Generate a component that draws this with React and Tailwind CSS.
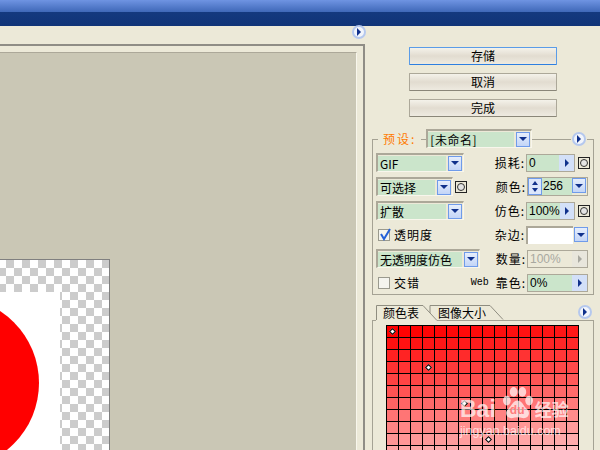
import { Fragment } from 'react'

const font = 'font-["Liberation_Sans","Noto_Sans_CJK_SC",sans-serif]'
const cjk = 'font-["Noto_Sans_CJK_SC",sans-serif]'

function Arrow({ dir = 'right', disabled }) {
  const fill = disabled ? '#a8a8a0' : '#10318c'
  return (
    <svg width="8" height="8" viewBox="0 0 8 8">
      {dir === 'right' && <path d="M2 0 L6 4 L2 8 Z" fill={fill} />}
      {dir === 'down' && <path d="M0 2 H8 L4 6 Z" fill={fill} />}
    </svg>
  )
}

function MenuCircle() {
  return (
    <div className="w-[14px] h-[14px] rounded-full border-2 border-[#b5c8ee] bg-[#f2f5fb] flex items-center justify-center">
      <svg width="6" height="8" viewBox="0 0 6 8">
        <path d="M1 0 L5 4 L1 8 Z" fill="#10318c" />
      </svg>
    </div>
  )
}

function DownButton() {
  return (
    <div className="w-[14px] h-[15px] shrink-0 border border-[#6f9bea] bg-gradient-to-b from-[#e6eefc] to-[#c3d5f7] flex items-center justify-center">
      <Arrow dir="down" />
    </div>
  )
}

function RoundToggle() {
  return (
    <div className="w-[12px] h-[12px] border border-[#222] bg-[#ece9d8] flex items-center justify-center shrink-0">
      <div className="w-[8px] h-[8px] rounded-full border border-[#333] bg-[#e4e4e4]" />
    </div>
  )
}

function Select({ label, width, spaced }) {
  return (
    <div
      className="h-[19px] flex items-center border-t-2 border-l-2 border-[#aca899] border-r border-r-[#f8f6ec] border-b border-b-[#f8f6ec] pr-[1px]"
      style={{ width }}
    >
      <div className={`flex-1 h-[15px] bg-[#cbe5cb] text-[12px] leading-[15px] pl-[2px] whitespace-nowrap ${spaced ? 'tracking-[0.5px]' : ''} ${cjk}`}>{label}</div>
      <div className="ml-[2px]">
        <DownButton />
      </div>
    </div>
  )
}

function ArrowField({ value }) {
  return (
    <div className="w-[49px] h-[18px] flex border border-[#aca899] shrink-0 mr-[2px]">
      <div className={`flex-1 text-[12px] leading-[16px] pl-[2px] bg-[#cbe5cb] text-black ${font}`}>{value}</div>
      <div className="w-[15px] flex items-center justify-center bg-[#d3e0f8]">
        <Arrow />
      </div>
    </div>
  )
}

function Label({ children }) {
  return <span className={`text-[12px] leading-[16px] tracking-[1px] text-black whitespace-nowrap ${cjk}`}>{children}</span>
}

function Check({ checked, label }) {
  return (
    <div className="flex items-center gap-[4px]">
      <div className="w-[12px] h-[12px] ml-[2px] border border-[#9a9a8e] bg-[#f4f4ee] relative">
        {checked && (
          <svg className="absolute left-[0px] top-[-2px]" width="12" height="13" viewBox="0 0 12 13">
            <path d="M2 6 L5 11 L11 1" fill="none" stroke="#2460d8" strokeWidth="2" />
          </svg>
        )}
      </div>
      <Label>{label}</Label>
    </div>
  )
}

function PaletteButton({ children, focused }) {
  return (
    <button
      type="button"
      className={`w-[148px] h-[18px] rounded-[1px] border bg-gradient-to-b from-[#f4f2ea] via-[#e2dcd0] to-[#eeeae0] text-[12px] leading-[16px] text-black ${cjk} ${
        focused ? 'border-[#5a9ce8] border-b-[#2e7fe0]' : 'border-[#aca899] border-b-[#8a8678]'
      }`}
    >
      {children}
    </button>
  )
}

const rows = Array.from({ length: 11 })
const cols = Array.from({ length: 16 })

function cellColor(r, c) {
  const v = Math.min(255, Math.round(r * 16.5 + c * 1.6))
  return `rgb(255, ${v}, ${v})`
}

function ColorGrid() {
  return (
    <div className="w-[193px] ml-[13px] mt-[4px] bg-black pt-[1px] pl-[1px] relative overflow-hidden h-[126px]">
      <div className="grid grid-cols-[repeat(16,11px)] gap-[1px]">
        {rows.map((_, r) => (
          <Fragment key={r}>
            {cols.map((_, c) => (
              <div key={c} className="h-[11px]" style={{ background: cellColor(r, c) }} />
            ))}
          </Fragment>
        ))}
      </div>
      {[
        [4, 4],
        [40, 40],
        [76, 76],
        [100, 112],
      ].map(([x, y]) => (
        <div
          key={x}
          className="absolute w-[5px] h-[5px] bg-white border border-black rotate-45"
          style={{ left: x, top: y }}
        />
      ))}
    </div>
  )
}

function Watermark() {
  return (
    <div className="absolute left-[87px] top-[65px] w-[112px] text-white/70 pointer-events-none">
      <div className="flex items-end h-[34px]">
        <span className="font-['Liberation_Sans',sans-serif] font-bold text-[23px] leading-[22px]">Bai</span>
        <div className="relative ml-[6px]">
          <svg width="31" height="33" viewBox="0 0 32 34" fill="currentColor">
            <ellipse cx="5" cy="14" rx="4" ry="5" />
            <ellipse cx="12" cy="5" rx="4" ry="5" />
            <ellipse cx="21" cy="5" rx="4" ry="5" />
            <ellipse cx="28" cy="14" rx="4" ry="5" />
            <path d="M16 14 C11 14 10 20 6 23 C2 27 5 33 11 32 C14 31 18 31 21 32 C27 33 30 27 26 23 C22 20 21 14 16 14 Z" />
          </svg>
          <span className="absolute left-[8px] top-[16px] text-[12px] leading-[14px] font-bold text-[#ff7c7c] font-['Liberation_Sans',sans-serif]">du</span>
        </div>
        <span className={`text-[17px] leading-[22px] ml-[2px] font-bold ${cjk}`}>经验</span>
      </div>
      <div className="font-['Liberation_Sans',sans-serif] text-[12.5px] leading-[14px] whitespace-nowrap mt-[4px]">jingyan.baidu.com</div>
    </div>
  )
}

export default function App() {
  return (
    <div className={`w-[600px] h-[450px] overflow-hidden bg-[#ece9d8] flex flex-col ${font}`}>
      <div className="h-[26px] shrink-0 flex flex-col">
        <div className="h-[12px] bg-gradient-to-b from-[#6f94e2] to-[#3f68b8]" />
        <div className="h-[14px] bg-gradient-to-b from-[#14397f] to-[#103478]" />
      </div>

      <div className="flex-1 flex min-h-0">
        {/* preview */}
        <div className="w-[365px] shrink-0 relative pt-[18px]">
          <div className="absolute right-[-1px] top-[-1px]">
            <MenuCircle />
          </div>
          <div className="h-full border-t-2 border-r-2 border-[#8f8d86] pt-[6px] pr-[6px]">
            <div className="h-full border-t border-r border-t-[#aca899] border-r-[#f8f6ec] bg-[#cac7b5] pt-[206px]">
              <div className="w-[110px] h-[200px] border-t border-r border-[#808080] bg-[conic-gradient(#ccc_25%,#fff_0_50%,#ccc_0_75%,#fff_0)] bg-[length:16px_16px] bg-[position:-2px_0] pt-[32px]">
                <div className="w-[60px] h-[170px] bg-white overflow-hidden relative">
                  <div className="absolute left-[-133px] top-[5px] w-[172px] h-[172px] rounded-full bg-[#ff0000]" />
                </div>
              </div>
            </div>
          </div>
        </div>

        {/* settings */}
        <div className="w-[235px] shrink-0 flex flex-col">
          <div className="flex flex-col gap-[8px] pl-[44px] pt-[21px] shrink-0">
            <PaletteButton focused>存储</PaletteButton>
            <PaletteButton>取消</PaletteButton>
            <PaletteButton>完成</PaletteButton>
          </div>

          {/* preset group */}
          <div className="ml-[7px] w-[222px] h-[156px] shrink-0 mt-[22px] border border-[#a5a294] px-[3px] relative">
            <div className="absolute left-[5px] top-[-11px] right-[6px] flex items-center bg-transparent">
              <span className={`text-[12px] leading-[16px] text-[#ff7a00] bg-[#ece9d8] px-[5px] tracking-[2px] ${cjk}`}>预设:</span>
              <div className="ml-[5px] relative bg-[#ece9d8]">
                <Select label="[未命名]" width={106} spaced />
              </div>
              <div className="ml-auto bg-[#ece9d8] px-[1px]">
                <MenuCircle />
              </div>
            </div>

            <div className="flex flex-col pt-[13px] gap-[5px]">
              <div className="h-[19px] flex items-center justify-between">
                <Select label="GIF" width={88} />
                <div className="flex items-center gap-[1px]">
                  <Label>损耗:</Label>
                  <ArrowField value="0" />
                  <RoundToggle />
                </div>
              </div>
              <div className="h-[19px] flex items-center justify-between pr-[2px]">
                <div className="flex items-center gap-[2px]">
                  <Select label="可选择" width={77} />
                  <RoundToggle />
                </div>
                <div className="flex items-center gap-[1px]">
                  <Label>颜色:</Label>
                  <div className="w-[61px] h-[19px] flex border border-[#aca899]">
                    <div className="w-[14px] flex flex-col items-center justify-center bg-[#dbe6fb] border border-[#6f9bea]">
                      <svg width="8" height="13" viewBox="0 0 8 13">
                        <path d="M4 1 L7 5 H1 Z M1 8 H7 L4 12 Z" fill="#10318c" />
                      </svg>
                    </div>
                    <div className="w-[30px] bg-[#cbe5cb] text-[12px] leading-[17px] pl-[1px]">256</div>
                    <DownButton />
                  </div>
                </div>
              </div>
              <div className="h-[19px] flex items-center justify-between">
                <Select label="扩散" width={88} />
                <div className="flex items-center gap-[1px]">
                  <Label>仿色:</Label>
                  <ArrowField value="100%" />
                  <RoundToggle />
                </div>
              </div>
              <div className="h-[19px] flex items-center justify-between pr-[2px]">
                <Check checked label="透明度" />
                <div className="flex items-center gap-[1px]">
                  <Label>杂边:</Label>
                  <div className="w-[47px] h-[18px] bg-white border-t-2 border-l-2 border-[#aca899]" />
                  <DownButton />
                </div>
              </div>
              <div className="h-[19px] flex items-center justify-between pr-[2px]">
                <Select label="无透明度仿色" width={104} />
                <div className="flex items-center gap-[1px]">
                  <Label>数量:</Label>
                  <div className="w-[61px] h-[18px] flex border border-[#aca899]">
                    <div className="flex-1 text-[12px] leading-[16px] pl-[2px] text-[#a8a8a0]">100%</div>
                    <div className="w-[15px] flex items-center justify-center bg-[#e8e6dc]">
                      <Arrow disabled />
                    </div>
                  </div>
                </div>
              </div>
              <div className="h-[19px] flex items-center justify-between pr-[2px]">
                <Check label="交错" />
                <div className="flex items-center gap-[1px]">
                  <span className="text-[10px] font-['Liberation_Mono',monospace] mr-[6px] leading-[16px]">Web</span>
                  <Label>靠色:</Label>
                  <div className="w-[61px] h-[18px] flex border border-[#aca899]">
                    <div className="flex-1 bg-[#cbe5cb] text-[12px] leading-[16px] pl-[2px]">0%</div>
                    <div className="w-[15px] flex items-center justify-center bg-[#d3e0f8]">
                      <Arrow />
                    </div>
                  </div>
                </div>
              </div>
            </div>
          </div>

          {/* tabs */}
          <div className="ml-[7px] w-[222px] mt-[10px] relative shrink-0">
            <svg className="absolute left-0 top-0 z-10" width="140" height="17" viewBox="0 0 140 17">
              <path d="M58 15.5 V0.5 H118 L131 14.5" fill="none" stroke="#8f8d80" />
              <path d="M4 16 V0.5 H51 L65 15.5 V17 H4 Z" fill="#ece9d8" />
              <path d="M4.5 15 V0.5 H51 L65 15.5" fill="none" stroke="#8f8d80" />
            </svg>
            <div className="flex h-[15px] relative z-20">
              <span className={`ml-[11px] text-[12px] leading-[16px] ${cjk}`}>颜色表</span>
              <span className={`ml-[19px] text-[12px] leading-[16px] ${cjk}`}>图像大小</span>
            </div>
            <div className="absolute right-[2px] top-0 z-10">
              <MenuCircle />
            </div>
            <div className="h-[200px] border border-[#a5a294] relative">
              <ColorGrid />
              <Watermark />
            </div>
          </div>
        </div>
      </div>
    </div>
  )
}
